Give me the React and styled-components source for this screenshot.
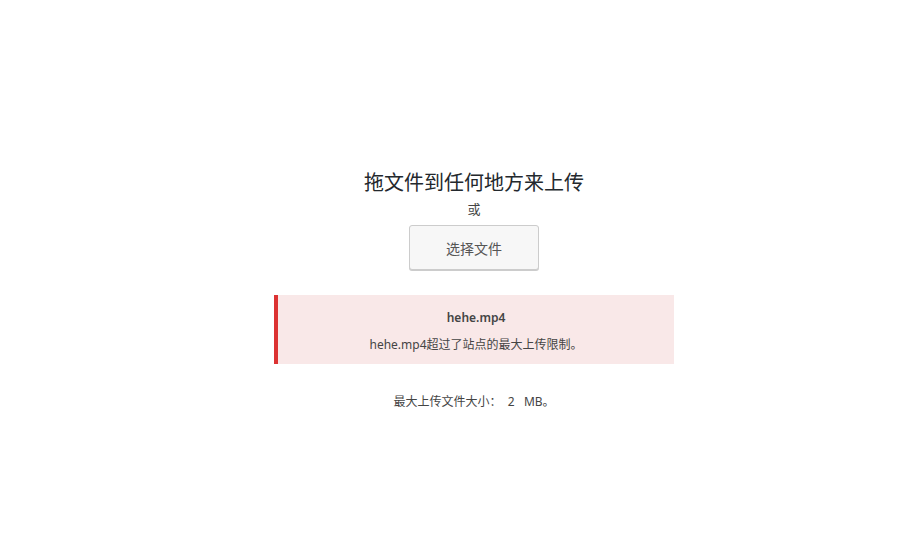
import React from "react";
import styled, { createGlobalStyle } from "styled-components";

const GlobalStyle = createGlobalStyle`
  html, body {
    margin: 0;
    padding: 0;
    background: #fff;
  }
  body {
    font-family: "Segoe UI", "Noto Sans", "Noto Sans CJK SC", sans-serif;
    color: #444;
  }
`;

const UploadArea = styled.div`
  display: flex;
  flex-direction: column;
  align-items: center;
  padding: 168px 0 0 51px;
`;

const Title = styled.h2`
  margin: 0;
  font-size: 20px;
  line-height: 28px;
  font-weight: 400;
  color: #23282d;
  font-family: "Noto Sans CJK SC", sans-serif;
`;

const OrText = styled.p`
  margin: 4px 0 7px;
  font-size: 13px;
  line-height: 18px;
  color: #444;
  font-family: "Noto Sans CJK SC", sans-serif;
`;

const SelectButton = styled.button`
  width: 130px;
  height: 45px;
  border: 1px solid #ccc;
  border-radius: 3px;
  background: #f7f7f7;
  box-shadow: 0 1px 0 #ccc;
  color: #555;
  font-size: 14px;
  font-family: "Noto Sans CJK SC", sans-serif;
  cursor: pointer;
  padding: 0;
`;

const ErrorNotice = styled.div`
  box-sizing: border-box;
  width: 400px;
  margin-top: 25px;
  padding: 13px 12px 9px;
  background: #f9e8e8;
  border-left: 4px solid #dc3232;
  text-align: center;
  font-size: 12px;
  color: #444;
`;

const ErrorLine = styled.p`
  margin: 0;
  line-height: 20px;
  font-weight: ${(p) => (p.$strong ? 600 : 400)};
  font-family: "Noto Sans", "Noto Sans CJK SC", sans-serif;
  & + & {
    margin-top: 7px;
  }
`;

const MaxSize = styled.p`
  margin: 28px 0 0;
  font-size: 12px;
  line-height: 20px;
  color: #444;
  font-family: "Noto Sans", "Noto Sans CJK SC", sans-serif;
  white-space: pre;
`;

export default function App() {
  return (
    <>
      <GlobalStyle />
      <UploadArea>
        <Title>拖文件到任何地方来上传</Title>
        <OrText>或</OrText>
        <SelectButton type="button">选择文件</SelectButton>
        <ErrorNotice>
          <ErrorLine $strong>hehe.mp4</ErrorLine>
          <ErrorLine>hehe.mp4超过了站点的最大上传限制。</ErrorLine>
        </ErrorNotice>
        <MaxSize>{"最大上传文件大小：  2   MB。"}</MaxSize>
      </UploadArea>
    </>
  );
}
